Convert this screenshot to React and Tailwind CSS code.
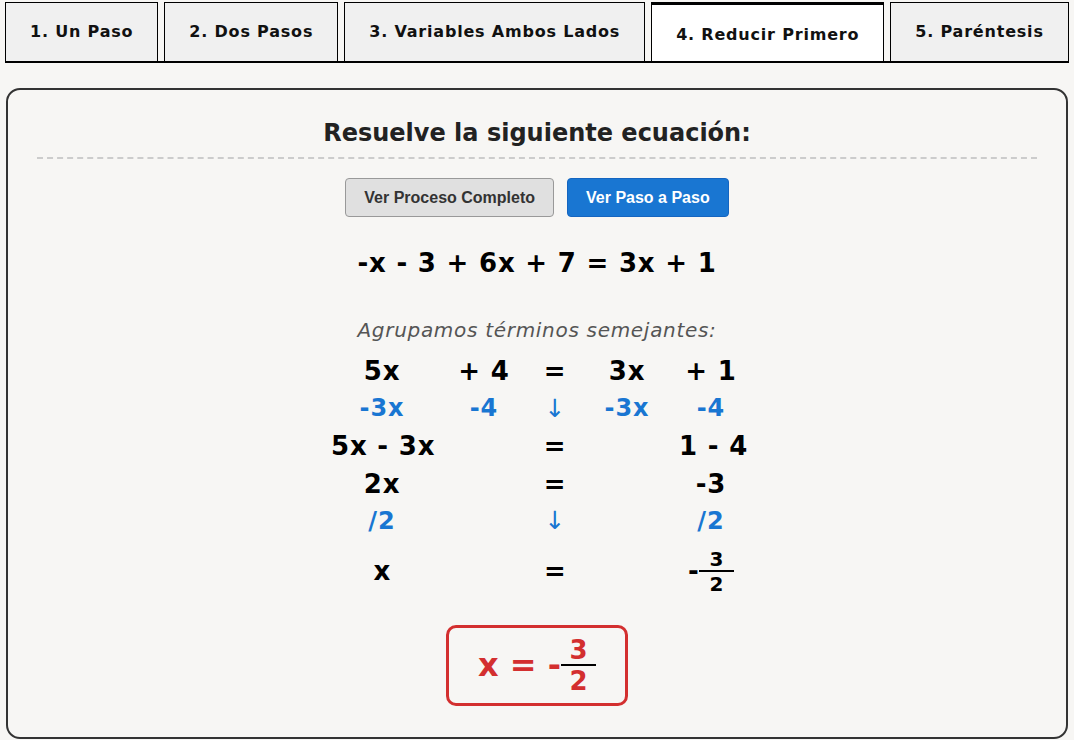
import React from 'react';

const tabs = ['1. Un Paso', '2. Dos Pasos', '3. Variables Ambos Lados', '4. Reducir Primero', '5. Paréntesis'];

const Frac = ({ num, den, size }) => (
  <span className={`inline-flex flex-col items-center leading-none ${size}`}>
    <span className="w-[35px] text-center border-b-2 border-black pb-[1px]">{num}</span>
    <span className="w-[35px] text-center pt-[2px]">{den}</span>
  </span>
);

const Row = ({ cells, blue }) => (
  <div className="grid grid-cols-[102px_102px_40px_104px_64px] items-center h-[37.5px]">
    {cells.map((c, i) => (
      <div
        key={i}
        className={`text-center whitespace-nowrap font-bold ${
          c === '↓'
            ? 'font-normal text-[25px] text-[#1976d2]'
            : blue
            ? 'text-[24px] tracking-[1px] text-[#1976d2]'
            : 'text-[26px] tracking-[0.8px] text-black'
        }`}
      >
        {c}
      </div>
    ))}
  </div>
);

export default function App() {
  return (
    <div className="min-h-[740px] bg-[#f7f6f4] pt-[2px]" style={{ fontFamily: '"DejaVu Sans", Verdana, sans-serif' }}>
      {/* Tabs */}
      <div className="ml-[5px] mr-[5px] flex gap-[6px] border-b-2 border-black">
        {tabs.map((t, i) => {
          const active = i === 3;
          return (
            <div
              key={t}
              className={`h-[59px] px-6 flex items-center justify-center text-[16px] tracking-[0.8px] font-bold text-[#111] border-x border-black ${
                active ? 'bg-white border-t-[3px] pt-[3px]' : 'bg-[#f0f0f0] border-t'
              }`}
            >
              {t}
            </div>
          );
        })}
      </div>

      {/* Card */}
      <div className="mx-[6px] mt-[25px] border-2 border-[#333] rounded-[14px] px-[29px] pt-[23px] pb-[31px] flex flex-col items-center">
        <h2 className="self-stretch text-center text-[24px] font-bold text-[#222] leading-[40px] pb-[4px] border-b-2 border-dashed border-[#ccc]">
          Resuelve la siguiente ecuación:
        </h2>

        <div className="mt-[19px] flex gap-[13px]" style={{ fontFamily: '"Liberation Sans", Arial, sans-serif' }}>
          <button className="h-[39px] px-[18px] rounded-[4px] border border-[#999] bg-[#e0e0e0] text-[#333] text-[16px] font-bold">
            Ver Proceso Completo
          </button>
          <button className="h-[39px] px-[18px] rounded-[4px] border border-[#1565c0] bg-[#1976d2] text-white text-[16px] font-bold">
            Ver Paso a Paso
          </button>
        </div>

        <div className="mt-[26px] text-[26px] tracking-[0.8px] font-bold text-black leading-[40px]">-x - 3 + 6x + 7 = 3x + 1</div>

        <div className="mt-[33px] text-[20px] tracking-[0.7px] italic text-[#555] leading-[28px]">Agrupamos términos semejantes:</div>

        <div className="mt-[8px] flex flex-col">
          <Row cells={['5x', '+ 4', '=', '3x', '+ 1']} />
          <Row cells={['-3x', '-4', '↓', '-3x', '-4']} blue />
          <Row cells={['5x - 3x', '', '=', '', '1 - 4']} />
          <Row cells={['2x', '', '=', '', '-3']} />
          <Row cells={['/2', '', '↓', '', '/2']} blue />
          <div className="grid grid-cols-[102px_102px_40px_104px_64px] items-center h-[64px] text-[26px] font-bold text-black">
            <div className="text-center">x</div>
            <div />
            <div className="text-center">=</div>
            <div />
            <div className="flex items-center justify-center">
              <span>-</span>
              <Frac num="3" den="2" size="text-[20px]" />
            </div>
          </div>
        </div>

        <div className="mt-[21px] w-[182px] h-[81px] border-[3px] border-[#d32f2f] rounded-[10px] flex items-center justify-center text-[#d32f2f] font-bold text-[32px]">
          <span className="whitespace-pre">x = -</span>
          <Frac num="3" den="2" size="text-[26px]" />
        </div>
      </div>
    </div>
  );
}
